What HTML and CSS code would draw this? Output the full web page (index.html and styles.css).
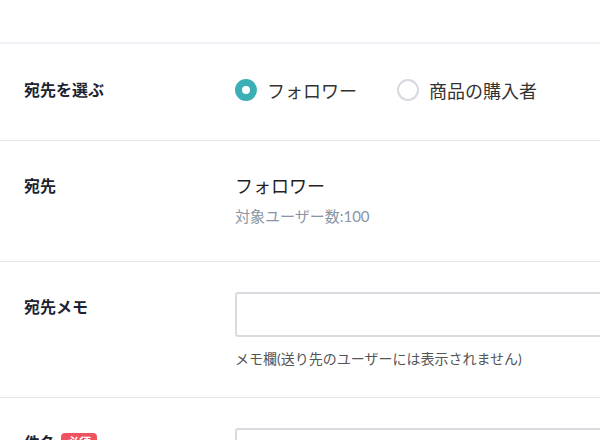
FILE: index.html
```html
<!DOCTYPE html>
<html lang="ja">
<head>
    <meta charset="UTF-8">
    <meta name="viewport" content="width=device-width, initial-scale=1.0">
    <title>宛先の設定</title>
    <link rel="stylesheet" href="styles.css">
</head>
<body>

    <div class="top-space"></div>

    <div class="form-row form-row-choice">
        <div class="form-label">宛先を選ぶ</div>
        <div class="form-field radio-group">
            <label class="radio-item">
                <span class="radio radio-checked"></span>
                <span class="radio-text">フォロワー</span>
            </label>
            <label class="radio-item">
                <span class="radio"></span>
                <span class="radio-text">商品の購入者</span>
            </label>
        </div>
    </div>

    <div class="form-row">
        <div class="form-label">宛先</div>
        <div class="form-field">
            <p class="value">フォロワー</p>
            <p class="count">対象ユーザー数:100</p>
        </div>
    </div>

    <div class="form-row form-row-memo">
        <div class="form-label">宛先メモ</div>
        <div class="form-field">
            <input class="text-input" type="text">
            <p class="hint">メモ欄(送り先のユーザーには表示されません)</p>
        </div>
    </div>

    <div class="form-row">
        <div class="form-label">件名<span class="badge">必須</span></div>
        <div class="form-field">
            <input class="text-input" type="text">
        </div>
    </div>

</body>
</html>
```

FILE: styles.css
```css
html, body {
    overflow: hidden;
}
body {
    margin: 0;
    width: 600px;
    font-family: Lato, "Noto Sans CJK JP", sans-serif;
    color: #222;
    background: #fff;
}
p {
    margin: 0;
}
.top-space {
    height: 42px;
    border-bottom: 2px solid #eef2f7;
}
.form-row {
    display: grid;
    grid-template-columns: 211px 1fr;
    padding: 30px 0 30px 24px;
    border-bottom: 1px solid #e6e6e6;
}
.form-row-choice {
    padding-bottom: 34px;
}
.form-row-memo {
    padding-bottom: 28px;
}
.form-label {
    font-size: 16px;
    font-weight: bold;
    line-height: 30px;
    color: #1d2330;
}
.form-row-choice .form-label {
    line-height: 32px;
}
.radio-group {
    display: flex;
    align-items: center;
    gap: 40px;
    height: 32px;
}
.radio-item {
    display: flex;
    align-items: center;
    gap: 10px;
}
.radio {
    width: 22px;
    height: 22px;
    box-sizing: border-box;
    border: 2px solid #d6d9df;
    border-radius: 50%;
    background: #fff;
}
.radio-checked {
    border: 7px solid #3aafb4;
}
.radio-text {
    font-size: 18px;
    color: #333;
}
.value {
    font-size: 18px;
    line-height: 30px;
    color: #222;
}
.count {
    font-size: 15px;
    line-height: 30px;
    color: #8795a7;
}
.text-input {
    display: block;
    width: 460px;
    height: 45px;
    box-sizing: border-box;
    border: 2px solid #d8dbe0;
    border-radius: 3px;
    padding: 0 10px;
    font-size: 15px;
}
.hint {
    margin-top: 12px;
    font-size: 14px;
    line-height: 20px;
    color: #555;
}
.badge {
    display: inline-block;
    margin-left: 5px;
    padding: 0 6px;
    border-radius: 4px;
    background: #f0525f;
    color: #fff;
    font-size: 12px;
    line-height: 20px;
    vertical-align: 2px;
}
```
